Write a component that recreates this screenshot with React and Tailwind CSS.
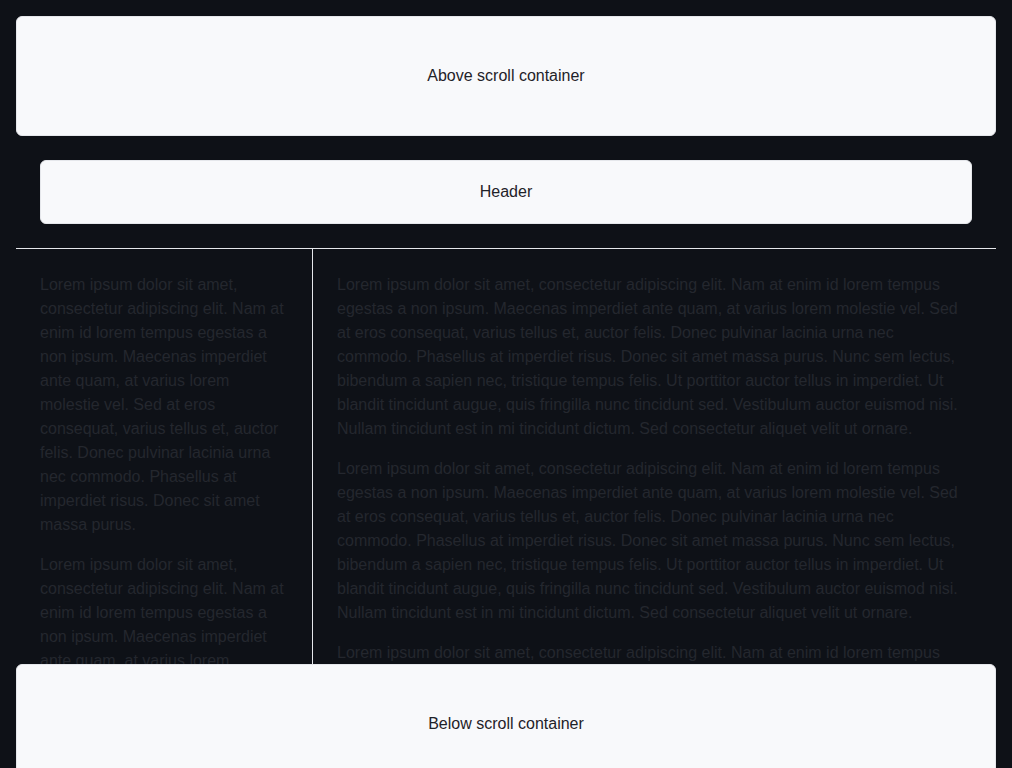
import React from "react";

const P = "Lorem ipsum dolor sit amet, consectetur adipiscing elit. Nam at enim id lorem tempus egestas a non ipsum. Maecenas imperdiet ante quam, at varius lorem molestie vel. Sed at eros consequat, varius tellus et, auctor felis. Donec pulvinar lacinia urna nec commodo. Phasellus at imperdiet risus. Donec sit amet massa purus.";
const Q = "Lorem ipsum dolor sit amet, consectetur adipiscing elit. Nam at enim id lorem tempus egestas a non ipsum. Maecenas imperdiet ante quam, at varius lorem molestie vel. Sed at eros consequat, varius tellus et, auctor felis. Donec pulvinar lacinia urna nec commodo. Phasellus at imperdiet risus. Donec sit amet massa purus. Nunc sem lectus, bibendum a sapien nec, tristique tempus felis. Ut porttitor auctor tellus in imperdiet. Ut blandit tincidunt augue, quis fringilla nunc tincidunt sed. Vestibulum auctor euismod nisi. Nullam tincidunt est in mi tincidunt dictum. Sed consectetur aliquet velit ut ornare.";

export default function App() {
  return (
    <div
      className="min-h-screen bg-[#0e1117] px-4 pt-4 text-base leading-6"
      style={{ fontFamily: '"Liberation Sans", Arial, sans-serif' }}
    >
      <div className="flex h-[120px] items-center justify-center rounded-md border border-gray-200 bg-[#f8f9fb] text-[#1f2228]">
        Above scroll container
      </div>
      <div className="flex h-[528px] flex-col overflow-hidden">
        <div className="shrink-0 border-b border-gray-200 p-6">
          <div className="flex h-16 items-center justify-center rounded-md border border-gray-200 bg-[#f8f9fb] text-[#1f2228]">
            Header
          </div>
        </div>
        <div className="flex min-h-0 flex-1">
          <div className="w-[297px] shrink-0 border-r border-gray-200 p-6 text-[#24272e] flex flex-col gap-4">
            {[0, 1, 2, 3].map((i) => (
              <p key={i}>{P}</p>
            ))}
          </div>
          <div className="flex-1 py-6 pl-6 pr-[35px] text-[#24272e] flex flex-col gap-4">
            {[0, 1, 2, 3].map((i) => (
              <p key={i}>{Q}</p>
            ))}
          </div>
        </div>
      </div>
      <div className="relative z-10 flex h-[120px] items-center justify-center rounded-md border border-gray-200 bg-[#f8f9fb] text-[#1f2228]">
        Below scroll container
      </div>
    </div>
  );
}
